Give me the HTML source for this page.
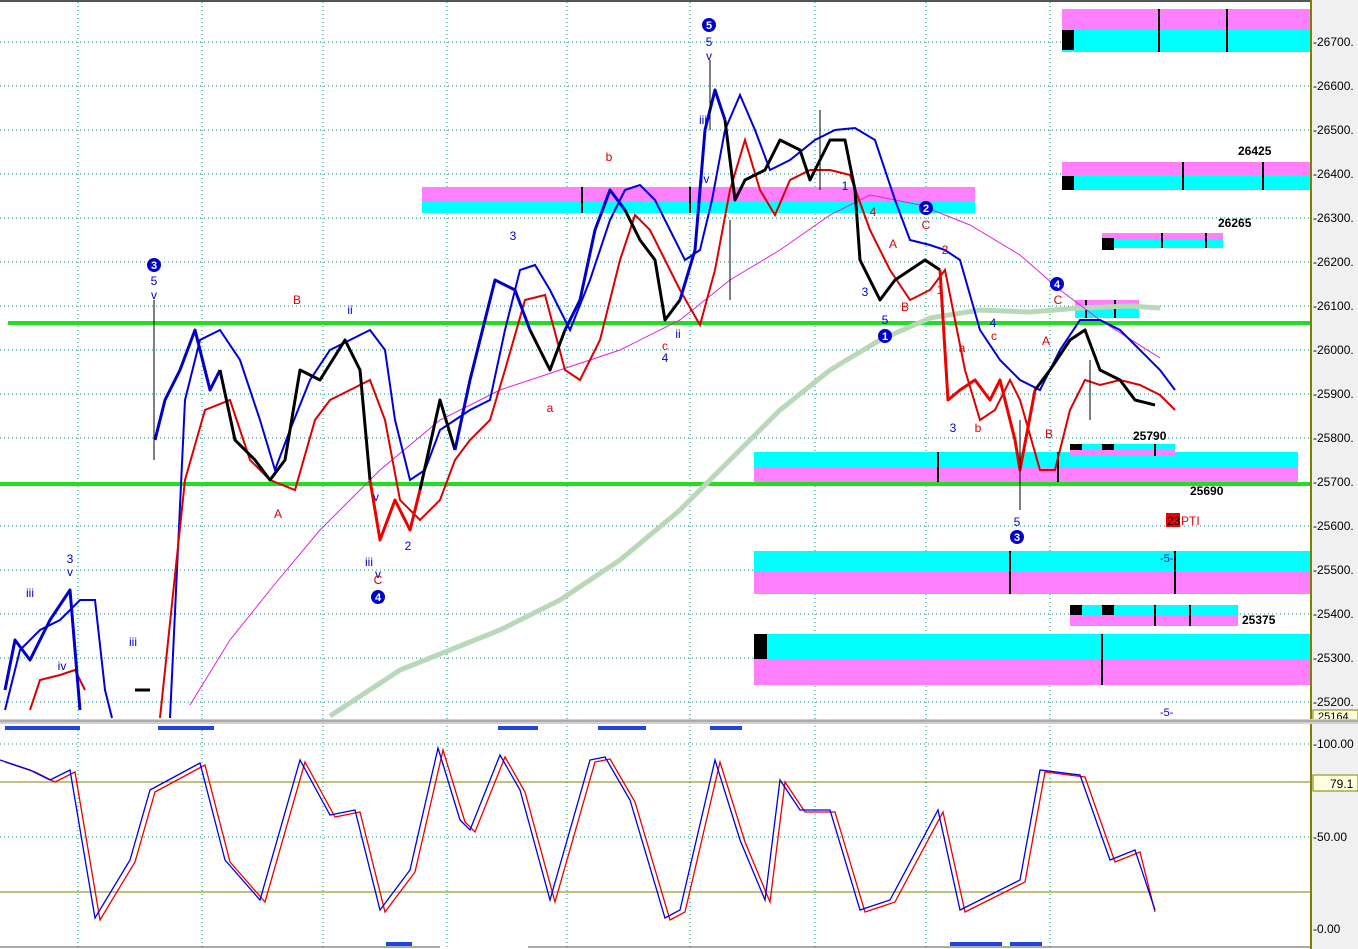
<!DOCTYPE html>
<html><head><meta charset="utf-8"><style>
html,body{margin:0;padding:0;background:#fff;}
svg{display:block;font-family:"Liberation Sans",sans-serif;}
</style></head><body>
<svg width="1358" height="949" viewBox="0 0 1358 949" xmlns="http://www.w3.org/2000/svg">
<rect width="1358" height="949" fill="#fff"/>
<rect x="0" y="0" width="1358" height="2" fill="#555"/>
<!-- grid -->
<g stroke="#008a8a" stroke-width="1" stroke-dasharray="1,3">
<line x1="0" y1="42" x2="1310" y2="42"/><line x1="0" y1="86" x2="1310" y2="86"/><line x1="0" y1="130" x2="1310" y2="130"/><line x1="0" y1="174" x2="1310" y2="174"/><line x1="0" y1="218" x2="1310" y2="218"/><line x1="0" y1="262" x2="1310" y2="262"/><line x1="0" y1="306" x2="1310" y2="306"/><line x1="0" y1="350" x2="1310" y2="350"/><line x1="0" y1="394" x2="1310" y2="394"/><line x1="0" y1="438" x2="1310" y2="438"/><line x1="0" y1="526" x2="1310" y2="526"/><line x1="0" y1="570" x2="1310" y2="570"/><line x1="0" y1="614" x2="1310" y2="614"/><line x1="0" y1="658" x2="1310" y2="658"/><line x1="0" y1="702" x2="1310" y2="702"/>
<line x1="0" y1="744" x2="1310" y2="744"/><line x1="0" y1="837" x2="1310" y2="837"/>
<line x1="78" y1="2" x2="78" y2="949"/><line x1="202" y1="2" x2="202" y2="949"/><line x1="323" y1="2" x2="323" y2="949"/><line x1="447" y1="2" x2="447" y2="949"/><line x1="567" y1="2" x2="567" y2="949"/><line x1="690" y1="2" x2="690" y2="949"/><line x1="815" y1="2" x2="815" y2="949"/><line x1="926" y1="2" x2="926" y2="949"/><line x1="1050" y1="2" x2="1050" y2="949"/>
</g>
<!-- zones -->
<rect x="1062" y="9" width="248" height="21" fill="#ff80ff"/><rect x="1062" y="30" width="248" height="22" fill="#00ffff"/><rect x="1062" y="30" width="12" height="20" fill="#000"/>
<rect x="1062" y="162" width="248" height="14" fill="#ff80ff"/><rect x="1062" y="176" width="248" height="14" fill="#00ffff"/><rect x="1062" y="176" width="12" height="14" fill="#000"/>
<rect x="1102" y="233" width="121" height="7" fill="#ff80ff"/><rect x="1102" y="240" width="121" height="8" fill="#00ffff"/><rect x="1102" y="238" width="12" height="12" fill="#000"/>
<rect x="422" y="187" width="553" height="14" fill="#ff80ff"/><rect x="422" y="201" width="553" height="12" fill="#00ffff"/>
<rect x="1075" y="300" width="64" height="8" fill="#ff80ff"/><rect x="1075" y="308" width="64" height="10" fill="#00ffff"/>
<rect x="754" y="452" width="544" height="15" fill="#00ffff"/><rect x="754" y="467" width="544" height="16" fill="#ff80ff"/>
<rect x="1070" y="444" width="105" height="6" fill="#00ffff"/><rect x="1070" y="450" width="105" height="6" fill="#ff80ff"/><rect x="1070" y="444" width="12" height="6" fill="#000"/><rect x="1102" y="444" width="12" height="6" fill="#000"/>
<rect x="754" y="551" width="556" height="21" fill="#00ffff"/><rect x="754" y="572" width="556" height="22" fill="#ff80ff"/>
<rect x="1070" y="605" width="168" height="10" fill="#00ffff"/><rect x="1070" y="615" width="168" height="11" fill="#ff80ff"/><rect x="1070" y="605" width="12" height="10" fill="#000"/><rect x="1102" y="605" width="12" height="10" fill="#000"/>
<rect x="754" y="634" width="556" height="26" fill="#00ffff"/><rect x="754" y="660" width="556" height="25" fill="#ff80ff"/><rect x="754" y="634" width="13" height="25" fill="#000"/>
<g stroke="#000" stroke-width="2">
<line x1="1159" y1="9" x2="1159" y2="52"/><line x1="1227" y1="9" x2="1227" y2="52"/>
<line x1="1183" y1="162" x2="1183" y2="190"/><line x1="1263" y1="162" x2="1263" y2="190"/>
<line x1="1162" y1="233" x2="1162" y2="248"/><line x1="1206" y1="233" x2="1206" y2="248"/>
<line x1="582" y1="187" x2="582" y2="213"/><line x1="690" y1="187" x2="690" y2="213"/>
<line x1="1086" y1="300" x2="1086" y2="318"/><line x1="1115" y1="300" x2="1115" y2="318"/>
<line x1="938" y1="452" x2="938" y2="483"/><line x1="1058" y1="452" x2="1058" y2="483"/><line x1="1155" y1="444" x2="1155" y2="456"/>
<line x1="1010" y1="551" x2="1010" y2="594"/><line x1="1175" y1="551" x2="1175" y2="594"/>
<line x1="1155" y1="605" x2="1155" y2="626"/><line x1="1190" y1="605" x2="1190" y2="626"/>
<line x1="1102" y1="634" x2="1102" y2="685"/>
</g>
<!-- green horizontals -->
<line x1="8" y1="323" x2="1310" y2="323" stroke="#22dd22" stroke-width="4"/>
<line x1="0" y1="484" x2="1310" y2="484" stroke="#22dd22" stroke-width="4"/>
<!-- MAs -->
<polyline fill="none" stroke="#b8d8b8" stroke-width="5" points="330,716 400,670 500,630 560,600 620,560 680,510 720,470 780,410 830,370 880,340 930,318 980,310 1030,312 1080,308 1130,306 1160,308"/>
<polyline fill="none" stroke="#e020e0" stroke-width="1" points="190,705 230,640 270,590 320,530 380,470 440,420 500,390 560,370 620,350 680,320 730,280 780,250 830,215 870,195 920,205 970,225 1020,255 1060,290 1100,320 1160,358"/>
<!-- blue band -->
<polyline fill="none" stroke="#0000dd" stroke-width="2" points="5,710 20,650 40,630 60,620 80,600 95,600 105,690 112,718 M0,0" />
<polyline fill="none" stroke="#0000dd" stroke-width="2" points="170,718 185,400 200,340 220,330 240,360 260,420 275,470 290,430 310,380 330,350 350,340 370,330 385,350 395,420 410,480 425,470 440,430 455,420 470,410 490,400 505,330 520,270 535,265 550,290 570,330 590,280 610,220 625,190 640,185 655,200 670,230 685,260 700,250 712,200 725,130 740,95 755,130 770,170 790,160 815,140 835,130 855,128 875,140 895,200 910,240 930,245 945,250 960,260 980,330 1000,360 1020,380 1040,390 1060,350 1080,320 1100,320 1120,330 1140,350 1160,370 1175,390"/>
<polyline fill="none" stroke="#dd0000" stroke-width="2" points="30,710 40,680 60,675 75,670 85,690 M0,0"/>
<polyline fill="none" stroke="#dd0000" stroke-width="2" points="160,718 185,480 205,410 230,400 250,460 270,480 295,490 315,420 330,400 350,390 370,380 385,420 400,500 420,520 440,500 455,460 470,440 490,420 505,370 525,300 545,295 565,370 580,380 600,340 620,260 635,215 650,230 665,260 680,290 700,325 715,270 730,190 745,140 760,190 775,215 790,180 810,170 830,170 850,175 870,230 890,270 910,300 930,290 945,270 965,370 980,420 995,410 1010,380 1020,400 1040,470 1055,470 1070,410 1085,380 1100,385 1120,380 1140,385 1160,395 1175,410"/>
<!-- price -->
<g fill="none" stroke-width="3" stroke-linejoin="round">
<polyline stroke="#0000cc" points="5,690 15,640 30,660 50,620 70,590 80,710"/>
<polyline stroke="#000" points="135,690 150,690"/>
<polyline stroke="#0000cc" points="155,440 165,400 180,370 195,330 210,390 220,370"/>
<polyline stroke="#000" points="220,370 235,440 255,460 270,480 285,460 300,370 320,380 345,340 360,370 370,480"/>
<polyline stroke="#ee0000" points="370,480 380,540 395,500 410,530 420,490"/>
<polyline stroke="#000" points="420,490 440,400 455,450"/>
<polyline stroke="#0000cc" points="455,450 470,380 495,280 515,290 530,330"/>
<polyline stroke="#000" points="530,330 550,370 565,330"/>
<polyline stroke="#0000cc" points="565,330 580,300 595,230 610,190 625,210"/>
<polyline stroke="#000" points="625,210 640,240 655,260 665,320 680,300"/>
<polyline stroke="#0000cc" points="680,300 695,250 705,130 715,90 725,120"/>
<polyline stroke="#000" points="725,120 735,200 745,180 765,170 780,140 800,150 810,180 830,140 845,140 855,190 860,260 870,280 880,300 895,280 910,270 925,260 940,270"/>
<polyline stroke="#ee0000" points="940,270 948,400 960,390 975,380 990,400 1000,380 1015,440 1020,470 1035,390"/>
<polyline stroke="#000" points="1035,390 1050,370 1070,340 1085,330 1100,370 1120,380 1135,400 1155,405"/>
</g>
<g stroke="#000" stroke-width="1"><line x1="154" y1="300" x2="154" y2="460"/><line x1="710" y1="60" x2="710" y2="130"/><line x1="820" y1="110" x2="820" y2="190"/><line x1="1020" y1="420" x2="1020" y2="510"/><line x1="730" y1="220" x2="730" y2="300"/><line x1="1090" y1="360" x2="1090" y2="420"/></g>
<!-- wave labels -->
<g font-size="12" text-anchor="middle">
<g fill="#0000cc"><text x="709" y="46">5</text><text x="709" y="60">v</text><text x="154" y="285">5</text><text x="154" y="299">v</text><text x="70" y="563">3</text><text x="70" y="576">v</text><text x="30" y="597">iii</text><text x="133" y="646">iii</text><text x="62" y="670">iv</text><text x="350" y="314">ii</text><text x="513" y="240">3</text><text x="703" y="124">iii</text><text x="705" y="183">iv</text><text x="665" y="362">4</text><text x="678" y="338">ii</text><text x="369" y="566">iii</text><text x="378" y="578">v</text><text x="408" y="550">2</text><text x="885" y="324">5</text><text x="865" y="296">3</text><text x="845" y="190">1</text><text x="993" y="327">4</text><text x="953" y="432">3</text><text x="1017" y="526">5</text><text x="376" y="501">v</text></g>
<g fill="#dd0000"><text x="297" y="304">B</text><text x="278" y="518">A</text><text x="378" y="584">C</text><text x="609" y="161">b</text><text x="550" y="412">a</text><text x="665" y="350">c</text><text x="926" y="229">C</text><text x="893" y="248">A</text><text x="905" y="311">B</text><text x="962" y="352">a</text><text x="978" y="432">b</text><text x="994" y="340">c</text><text x="1046" y="345">A</text><text x="1058" y="304">C</text><text x="1049" y="438">B</text><text x="945" y="254">2</text><text x="940" y="294">1</text><text x="873" y="216">4</text></g>
</g>
<g font-size="11" font-weight="bold" fill="#fff" text-anchor="middle">
<circle cx="709" cy="25" r="7" fill="#0000cc"/><text x="709" y="29">5</text>
<circle cx="154" cy="265" r="7" fill="#0000cc"/><text x="154" y="269">3</text>
<circle cx="378" cy="597" r="7" fill="#0000cc"/><text x="378" y="601">4</text>
<circle cx="885" cy="336" r="7" fill="#0000cc"/><text x="885" y="340">1</text>
<circle cx="926" cy="208" r="7" fill="#0000cc"/><text x="926" y="212">2</text>
<circle cx="1017" cy="537" r="7" fill="#0000cc"/><text x="1017" y="541">3</text>
<circle cx="1057" cy="284" r="7" fill="#0000cc"/><text x="1057" y="288">4</text>
</g>
<g font-size="12" font-weight="bold" fill="#000">
<text x="1238" y="155">26425</text><text x="1218" y="227">26265</text><text x="1133" y="440">25790</text><text x="1190" y="495">25690</text><text x="1242" y="624">25375</text>
</g>
<rect x="1166" y="513" width="14" height="14" fill="#ee0000"/><text x="1167" y="525" font-size="12" fill="#000">23</text><text x="1181" y="525" font-size="12" fill="#ee0000">PTI</text>
<text x="1160" y="562" font-size="11" fill="#0000cc">-5-</text><text x="1160" y="716" font-size="11" fill="#0000cc">-5-</text>
<!-- axis -->
<rect x="1310" y="0" width="48" height="949" fill="#f0f0f0"/>
<line x1="1311" y1="0" x2="1311" y2="949" stroke="#808000" stroke-width="2"/>
<g font-size="12" fill="#000">
<text x="1313" y="46">-26700.</text><text x="1313" y="90">-26600.</text><text x="1313" y="134">-26500.</text><text x="1313" y="178">-26400.</text><text x="1313" y="222">-26300.</text><text x="1313" y="266">-26200.</text><text x="1313" y="310">-26100.</text><text x="1313" y="354">-26000.</text><text x="1313" y="398">-25900.</text><text x="1313" y="442">-25800.</text><text x="1313" y="486">-25700.</text><text x="1313" y="530">-25600.</text><text x="1313" y="574">-25500.</text><text x="1313" y="618">-25400.</text><text x="1313" y="662">-25300.</text><text x="1313" y="706">-25200.</text>
<text x="1313" y="748">-100.00</text><text x="1313" y="841">-50.00</text><text x="1313" y="933">-0.00</text>
</g>
<rect x="1313" y="710" width="45" height="10" fill="#ffffe0" stroke="#808000"/><text x="1318" y="720" font-size="11">25164</text>
<rect x="1313" y="775" width="45" height="16" fill="#ffffe0" stroke="#808000"/><text x="1330" y="788" font-size="12">79.1</text>
<!-- divider -->
<rect x="0" y="719" width="1358" height="5" fill="#d0d0d0"/><line x1="0" y1="721" x2="1358" y2="721" stroke="#888"/>
<!-- marker bars -->
<g fill="#2244dd"><rect x="5" y="726" width="75" height="4"/><rect x="158" y="726" width="56" height="4"/><rect x="498" y="726" width="40" height="4"/><rect x="598" y="726" width="48" height="4"/><rect x="710" y="726" width="32" height="4"/><rect x="386" y="942" width="26" height="4"/><rect x="950" y="942" width="52" height="4"/><rect x="1010" y="942" width="32" height="4"/></g>
<line x1="0" y1="782" x2="1310" y2="782" stroke="#808000"/><line x1="0" y1="892" x2="1310" y2="892" stroke="#808000"/>
<line x1="0" y1="947" x2="440" y2="947" stroke="#555"/><line x1="528" y1="947" x2="1310" y2="947" stroke="#555"/>
<!-- stochastic -->
<polyline fill="none" stroke="#ee0000" stroke-width="1.3" transform="translate(5,2)" points="0,760 30,770 50,780 70,770 95,918 130,860 150,790 200,763 225,860 260,900 300,760 330,815 355,810 380,910 410,870 438,748 460,820 470,830 500,755 520,790 550,900 590,760 605,757 630,800 665,918 680,910 715,760 740,840 765,900 780,780 800,810 830,810 860,910 890,900 938,810 960,910 990,895 1020,880 1040,770 1080,775 1110,860 1135,850 1150,910"/>
<polyline fill="none" stroke="#0000ee" stroke-width="1.3" points="0,760 30,770 50,780 70,770 95,918 130,860 150,790 200,763 225,860 260,900 300,760 330,815 355,810 380,910 410,870 438,748 460,820 470,830 500,755 520,790 550,900 590,760 605,757 630,800 665,918 680,910 715,760 740,840 765,900 780,780 800,810 830,810 860,910 890,900 938,810 960,910 990,895 1020,880 1040,770 1080,775 1110,860 1135,850 1155,910"/>
</svg>
</body></html>
